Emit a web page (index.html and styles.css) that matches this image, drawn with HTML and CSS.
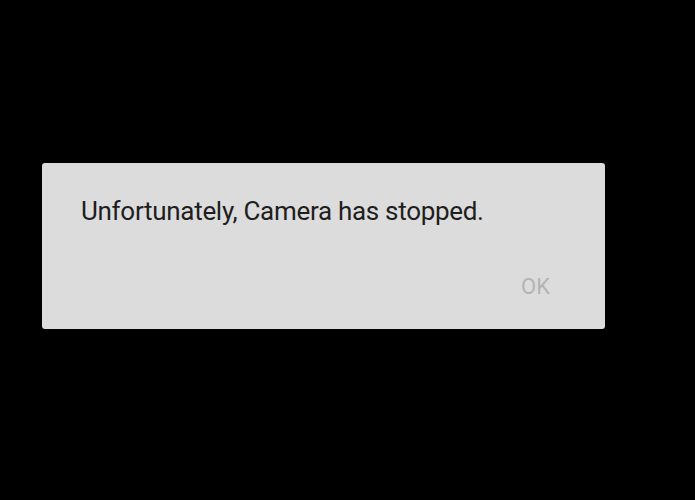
FILE: index.html
```html
<!DOCTYPE html>
<html lang="en">
<head>
    <meta charset="UTF-8">
    <meta name="viewport" content="width=device-width, initial-scale=1.0">
    <title>Camera has stopped</title>
    <link rel="stylesheet" href="styles.css">
</head>
<body>
    <main class="screen">
        <section class="dialog">
            <p class="message">Unfortunately, Camera has stopped.</p>
            <div class="actions">
                <button type="button" class="ok-btn">OK</button>
            </div>
        </section>
    </main>
</body>
</html>
```

FILE: styles.css
```css
* {
    margin: 0;
    padding: 0;
    box-sizing: border-box;
}

body {
    background-color: #000;
    font-family: 'Roboto', 'Noto Sans', sans-serif;
    width: 695px;
    height: 500px;
    overflow: hidden;
}

.screen {
    padding: 163px 0 0 42px;
}

.dialog {
    width: 563px;
    height: 166px;
    background-color: #dcdcdc;
    border-radius: 3px;
    padding: 34px 38px 0 38px;
    display: flex;
    flex-direction: column;
}

.message {
    font-size: 26px;
    letter-spacing: -0.3px;
    color: #1e1e1e;
    line-height: 28px;
    padding-left: 1px;
}

.actions {
    display: flex;
    justify-content: flex-end;
    margin-top: 50px;
}

.ok-btn {
    background: none;
    border: none;
    font-family: inherit;
    font-size: 22px;
    color: #b4b4b4;
    padding: 0 17px 0 0;
    line-height: 24px;
}
```
